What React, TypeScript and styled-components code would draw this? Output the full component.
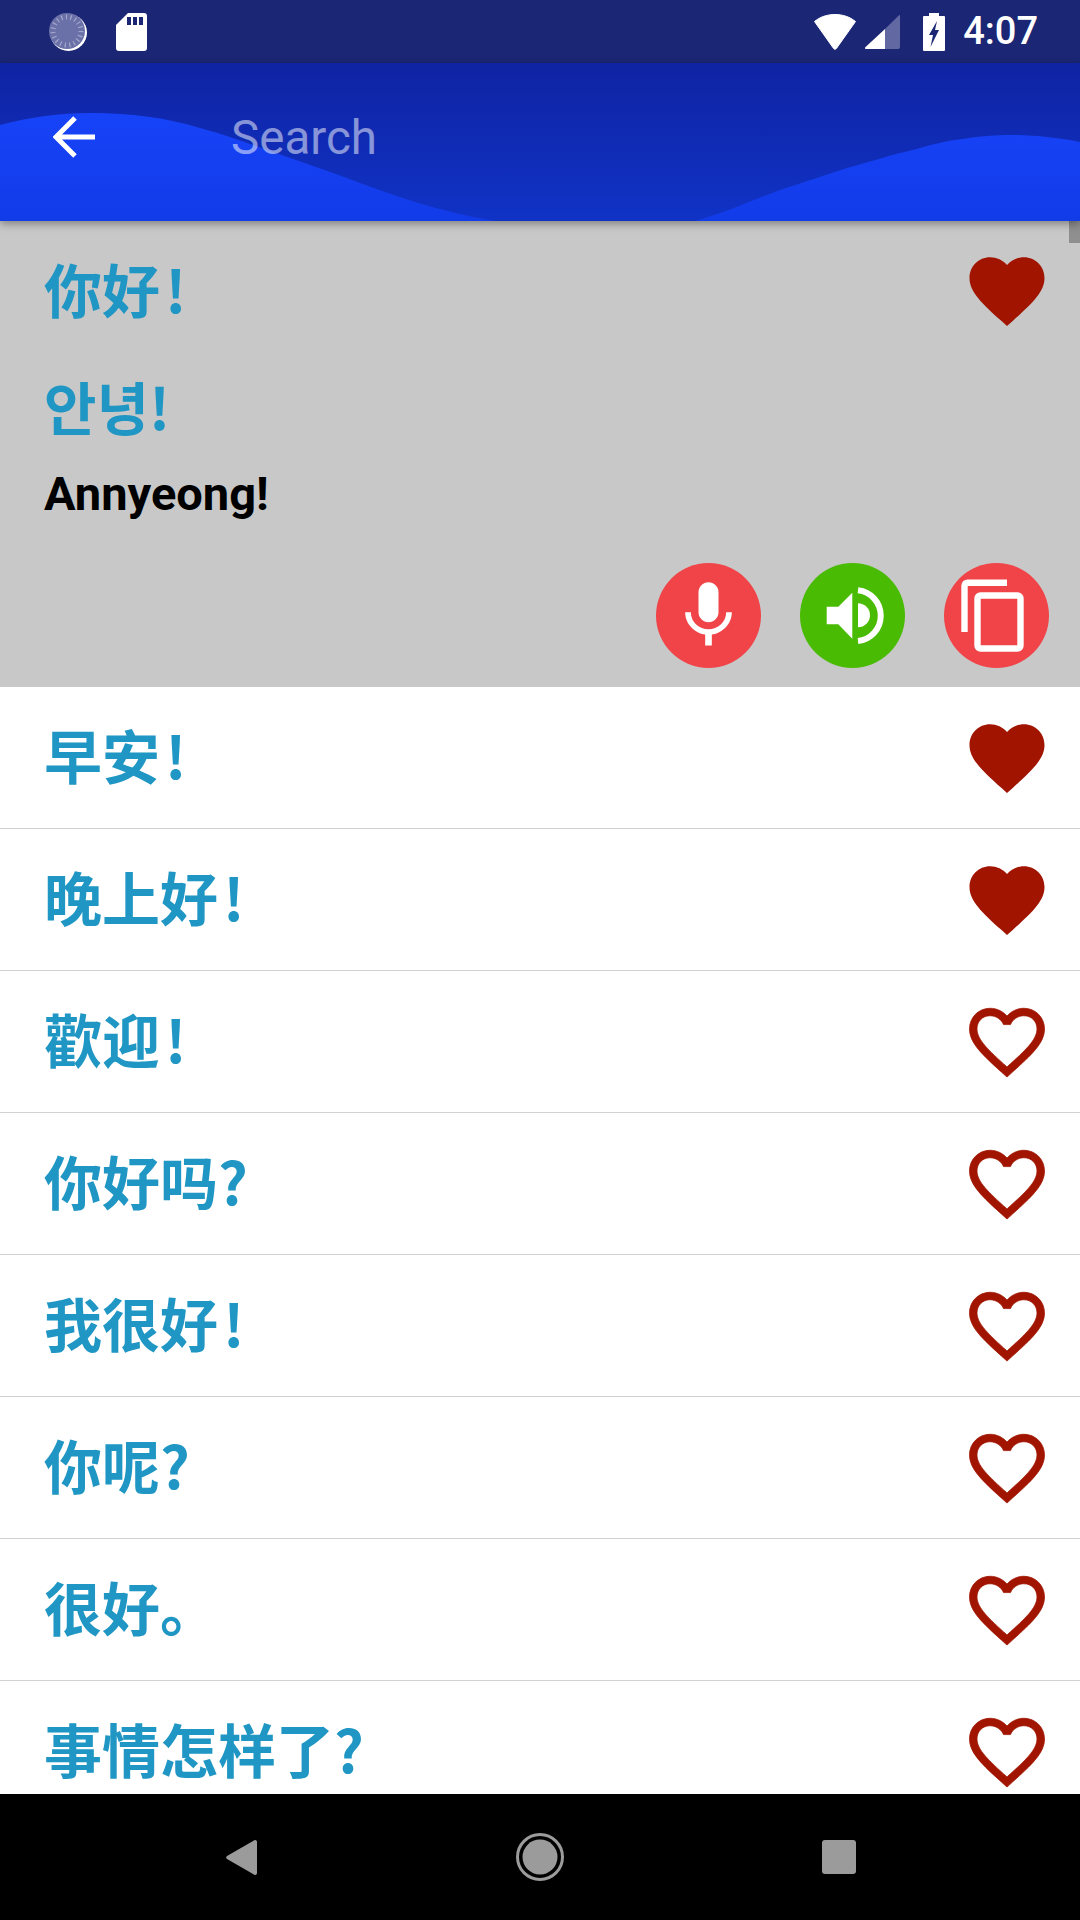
import React from "react";
import styled, { createGlobalStyle } from "styled-components";

const GlobalStyle = createGlobalStyle`
  html, body {
    margin: 0;
    padding: 0;
    background: #ffffff;
  }
  * {
    box-sizing: border-box;
  }
`;

const Page = styled.div`
  width: 1080px;
  height: 1920px;
  display: flex;
  flex-direction: column;
  overflow: hidden;
  font-family: "Roboto", "Noto Sans CJK SC", sans-serif;
`;

const StatusBar = styled.div`
  height: 63px;
  flex: none;
  background-color: #1b2675;
  display: flex;
  align-items: center;
  padding: 0 42px 0 49px;
  color: #ffffff;
`;
const StatusLeft = styled.div`
  display: flex;
  align-items: center;
  gap: 29px;
`;
const StatusRight = styled.div`
  margin-left: auto;
  display: flex;
  align-items: center;
  gap: 8px;
`;
const Clock = styled.div`
  font-size: 38px;
  font-weight: 500;
  line-height: 63px;
  margin-left: 10px;
`;
const BatterySlot = styled.div`
  display: flex;
  margin-left: 15px;
`;

const Header = styled.div`
  position: relative;
  z-index: 2;
  height: 158px;
  flex: none;
  background: linear-gradient(180deg, #0f23a3 0%, #1033c6 100%);
  box-shadow: 0 3px 8px rgba(0, 0, 0, 0.35);
  display: flex;
  align-items: center;
  padding: 0 0 10px 53px;
`;
const Wave = styled.svg`
  position: absolute;
  left: 0;
  top: 0;
`;
const BackButton = styled.svg`
  position: relative;
  flex: none;
`;
const SearchLabel = styled.div`
  position: relative;
  margin: 2px 0 0 136px;
  font-size: 47.5px;
  color: rgba(255, 255, 255, 0.5);
`;

const List = styled.div`
  position: relative;
  flex: 1;
  min-height: 0;
  overflow: hidden;
`;
const ScrollThumb = styled.div`
  position: absolute;
  right: 0;
  top: 0;
  width: 11px;
  height: 22px;
  background-color: #8f8f8f;
`;

const Selected = styled.div`
  height: 466px;
  background-color: #c8c8c8;
  padding: 0 28px 0 44px;
  display: flex;
  flex-direction: column;
`;
const SelectedTop = styled.div`
  display: flex;
  align-items: center;
  justify-content: space-between;
  height: 140px;
`;
const Korean = styled.div`
  color: #1f96c3;
  font-family: "Noto Sans CJK KR", sans-serif;
  font-weight: 700;
  font-size: 57px;
  line-height: 70px;
  margin-top: 9px;
`;
const Romanized = styled.div`
  color: #000000;
  font-family: "Roboto", sans-serif;
  font-weight: 700;
  font-size: 47px;
  line-height: 54px;
  margin-top: 27px;
`;
const Actions = styled.div`
  display: flex;
  justify-content: flex-end;
  gap: 39px;
  margin-top: 42px;
  padding-right: 3px;
`;
const ActionButton = styled.div<{ $color: string }>`
  width: 105px;
  height: 105px;
  border-radius: 50%;
  background-color: ${(p) => p.$color};
`;

const Row = styled.div`
  height: 142px;
  flex: none;
  background-color: #ffffff;
  border-bottom: 1px solid #d2d2d2;
  padding: 0 28px 0 44px;
  display: flex;
  align-items: center;
  justify-content: space-between;
`;
const Phrase = styled.div`
  color: #1f96c3;
  font-family: "Noto Sans CJK SC", sans-serif;
  font-weight: 700;
  font-size: 58px;
  line-height: 70px;
  padding-bottom: 7px;
  box-sizing: content-box;
`;
const Bang = styled.span`
  margin-left: 5px;
`;

const NavBar = styled.div`
  height: 126px;
  flex: none;
  background-color: #000000;
  display: flex;
  align-items: center;
`;
const NavSlot = styled.div<{ $left: number }>`
  margin-left: ${(p) => p.$left}px;
  display: flex;
`;

const HEART =
  "M12 21.35l-1.45-1.32C5.4 15.36 2 12.28 2 8.5 2 5.42 4.42 3 7.5 3c1.74 0 3.41.81 4.5 2.09C13.09 3.81 14.76 3 16.5 3 19.58 3 22 5.42 22 8.5c0 3.78-3.4 6.86-8.55 11.54L12 21.35z";
const HEART_BORDER =
  "M16.5 3c-1.74 0-3.41.81-4.5 2.09C10.91 3.81 9.24 3 7.5 3 4.42 3 2 5.42 2 8.5c0 3.78 3.4 6.86 8.55 11.54L12 21.35l1.45-1.32C18.6 15.36 22 12.28 22 8.5 22 5.42 19.58 3 16.5 3zm-4.4 15.55l-.1.1-.1-.1C7.14 14.24 4 11.39 4 8.5 4 6.5 5.5 5 7.5 5c1.54 0 3.04.99 3.57 2.36h1.87C13.46 5.99 14.96 5 16.5 5c2 0 3.5 1.5 3.5 3.5 0 2.89-3.14 5.74-7.9 10.05z";

const Heart = ({ filled }: { filled: boolean }) => (
  <svg width="90" height="90" viewBox="0 0 24 24" fill="#a01400">
    <path
      d={filled ? HEART : HEART_BORDER}
      stroke={filled ? "none" : "#a01400"}
      strokeWidth="0.2"
    />
  </svg>
);

const phrases = [
  { text: "早安", bang: true, liked: true },
  { text: "晚上好", bang: true, liked: true },
  { text: "歡迎", bang: true, liked: false },
  { text: "你好吗?", bang: false, liked: false },
  { text: "我很好", bang: true, liked: false },
  { text: "你呢?", bang: false, liked: false },
  { text: "很好。", bang: false, liked: false },
  { text: "事情怎样了?", bang: false, liked: false },
];

const LoadIcon = () => (
  <svg width="38" height="38" viewBox="0 0 38 38">
    <circle cx="19.5" cy="19.5" r="18.5" fill="#ffffff" />
    <circle cx="18" cy="18" r="18" fill="#6a70a8" />
    <circle
      cx="18"
      cy="18"
      r="14"
      fill="none"
      stroke="#a3a7ca"
      strokeWidth="5"
      strokeDasharray="1.2 3.4"
    />
  </svg>
);

const SdIcon = () => (
  <svg width="31" height="38" viewBox="0 0 31 38">
    <path
      d="M12 0H28a3 3 0 0 1 3 3V35a3 3 0 0 1-3 3H3a3 3 0 0 1-3-3V12Z"
      fill="#ffffff"
    />
    <path d="M11 4h4v8h-4zM17 4h4v8h-4zM23 4h4v8h-4z" fill="#1b2675" />
  </svg>
);

const WifiIcon = () => (
  <svg width="44" height="36" viewBox="0 0 44 36">
    <path
      d="M1.5 7.5C7 3 14 .5 22 .5S37 3 42.5 7.5L23.4 34.5a1.7 1.7 0 0 1-2.8 0Z"
      fill="#ffffff"
      stroke="#ffffff"
      strokeLinejoin="round"
    />
  </svg>
);

const SignalIcon = () => (
  <svg width="35" height="35" viewBox="0 0 35 35">
    <path d="M20 15L34 1.2a.6.6 0 0 1 1 .4V33a2 2 0 0 1-2 2H20Z" fill="#6268a2" />
    <path d="M20 15V35H1a1 1 0 0 1-.7-1.7Z" fill="#ffffff" />
  </svg>
);

const BatteryIcon = () => (
  <svg width="22" height="38" viewBox="0 0 22 38">
    <path
      d="M6 0H16V3H21a1 1 0 0 1 1 1V37a1 1 0 0 1-1 1H1a1 1 0 0 1-1-1V4a1 1 0 0 1 1-1H6Z"
      fill="#ffffff"
    />
    <path d="M14 8L6 22H10L7.5 34L16 17H12Z" fill="#1b2675" />
  </svg>
);

const MicIcon = () => (
  <svg width="105" height="105" viewBox="-3.75 -3.75 31.5 31.5" fill="#ffffff">
    <path d="M12 14c1.66 0 3-1.34 3-3V5c0-1.66-1.34-3-3-3S9 3.34 9 5v6c0 1.66 1.34 3 3 3z" />
    <path d="M17.3 11c0 3-2.54 5.1-5.3 5.1S6.7 14 6.7 11H5c0 3.41 2.72 6.23 6 6.72V21h2v-3.28c3.28-.48 6-3.3 6-6.72h-1.7z" />
  </svg>
);

const SpeakerIcon = () => (
  <svg width="105" height="105" viewBox="0 0 105 105" fill="#ffffff">
    <path d="M26.7 43.7H38.3L52.3 29.7V75.7L38.3 61.3H26.7Z" />
    <path d="M58 40.3A12 12 0 0 1 58 64.3Z" />
    <path d="M58 27.3A25.5 25.5 0 0 1 58 78" fill="none" stroke="#ffffff" strokeWidth="6" />
  </svg>
);

const CopyIcon = () => (
  <svg width="105" height="105" viewBox="0 0 105 105" fill="none" stroke="#ffffff" strokeWidth="6.4">
    <path d="M63 19.7H23.5a3 3 0 0 0-3 3V69" />
    <rect x="33.5" y="32.5" width="43" height="53" rx="3" />
  </svg>
);

const NavBack = () => (
  <svg width="31" height="35" viewBox="0 0 31 35" fill="#9b9b9b">
    <path d="M27.5.8L1 16a2 2 0 0 0 0 3L27.5 34.2a2 2 0 0 0 3.5-1.7V2.5a2 2 0 0 0-3.5-1.7Z" />
  </svg>
);

const NavHome = () => (
  <svg width="48" height="48" viewBox="0 0 48 48">
    <circle cx="24" cy="24" r="22.5" fill="none" stroke="#9b9b9b" strokeWidth="3" />
    <circle cx="24" cy="24" r="17.5" fill="#9b9b9b" />
  </svg>
);

const NavRecent = () => (
  <svg width="34" height="34" viewBox="0 0 34 34">
    <rect width="34" height="34" rx="3" fill="#9b9b9b" />
  </svg>
);

const App = () => {
  return (
    <Page>
      <GlobalStyle />
      <StatusBar>
        <StatusLeft>
          <LoadIcon />
          <SdIcon />
        </StatusLeft>
        <StatusRight>
          <WifiIcon />
          <SignalIcon />
          <BatterySlot>
            <BatteryIcon />
          </BatterySlot>
          <Clock>4:07</Clock>
        </StatusRight>
      </StatusBar>
      <Header>
        <Wave width="1080" height="158" viewBox="0 0 1080 158">
          <defs>
            <linearGradient id="waveFill" x1="0" y1="0" x2="0" y2="1">
              <stop offset="0" stopColor="#1743f8" />
              <stop offset="1" stopColor="#123be8" />
            </linearGradient>
          </defs>
          <path
            d="M0 62C30 54 60 50 90 50C130 50 168 55 200 65C225 72 245 79 267 87C290 95 311 102 333 110C356 118 378 127 400 134C430 144 460 152 495 158L695 158C725 150 750 138 780 127C805 119 825 112 847 105C870 99 890 92 913 87C930 82 945 78 963 76C980 73 995 72 1013 72C1035 72 1060 75 1080 79V158H0Z"
            fill="url(#waveFill)"
          />
        </Wave>
        <BackButton width="42" height="42" viewBox="0 0 42 42">
          <path
            d="M22 2L3 21L22 40M3 21H42"
            fill="none"
            stroke="#ffffff"
            strokeWidth="5"
          />
        </BackButton>
        <SearchLabel>Search</SearchLabel>
      </Header>
      <List>
        <ScrollThumb />
        <Selected>
          <SelectedTop>
            <Phrase>
              你好<Bang>!</Bang>
            </Phrase>
            <Heart filled />
          </SelectedTop>
          <Korean>안녕!</Korean>
          <Romanized>Annyeong!</Romanized>
          <Actions>
            <ActionButton $color="#f04448">
              <MicIcon />
            </ActionButton>
            <ActionButton $color="#48bb02">
              <SpeakerIcon />
            </ActionButton>
            <ActionButton $color="#f04448">
              <CopyIcon />
            </ActionButton>
          </Actions>
        </Selected>
        {phrases.map((item) => (
          <Row key={item.text}>
            <Phrase>
              {item.text}
              {item.bang && <Bang>!</Bang>}
            </Phrase>
            <Heart filled={item.liked} />
          </Row>
        ))}
      </List>
      <NavBar>
        <NavSlot $left={226}>
          <NavBack />
        </NavSlot>
        <NavSlot $left={259}>
          <NavHome />
        </NavSlot>
        <NavSlot $left={258}>
          <NavRecent />
        </NavSlot>
      </NavBar>
    </Page>
  );
};

export default App;
